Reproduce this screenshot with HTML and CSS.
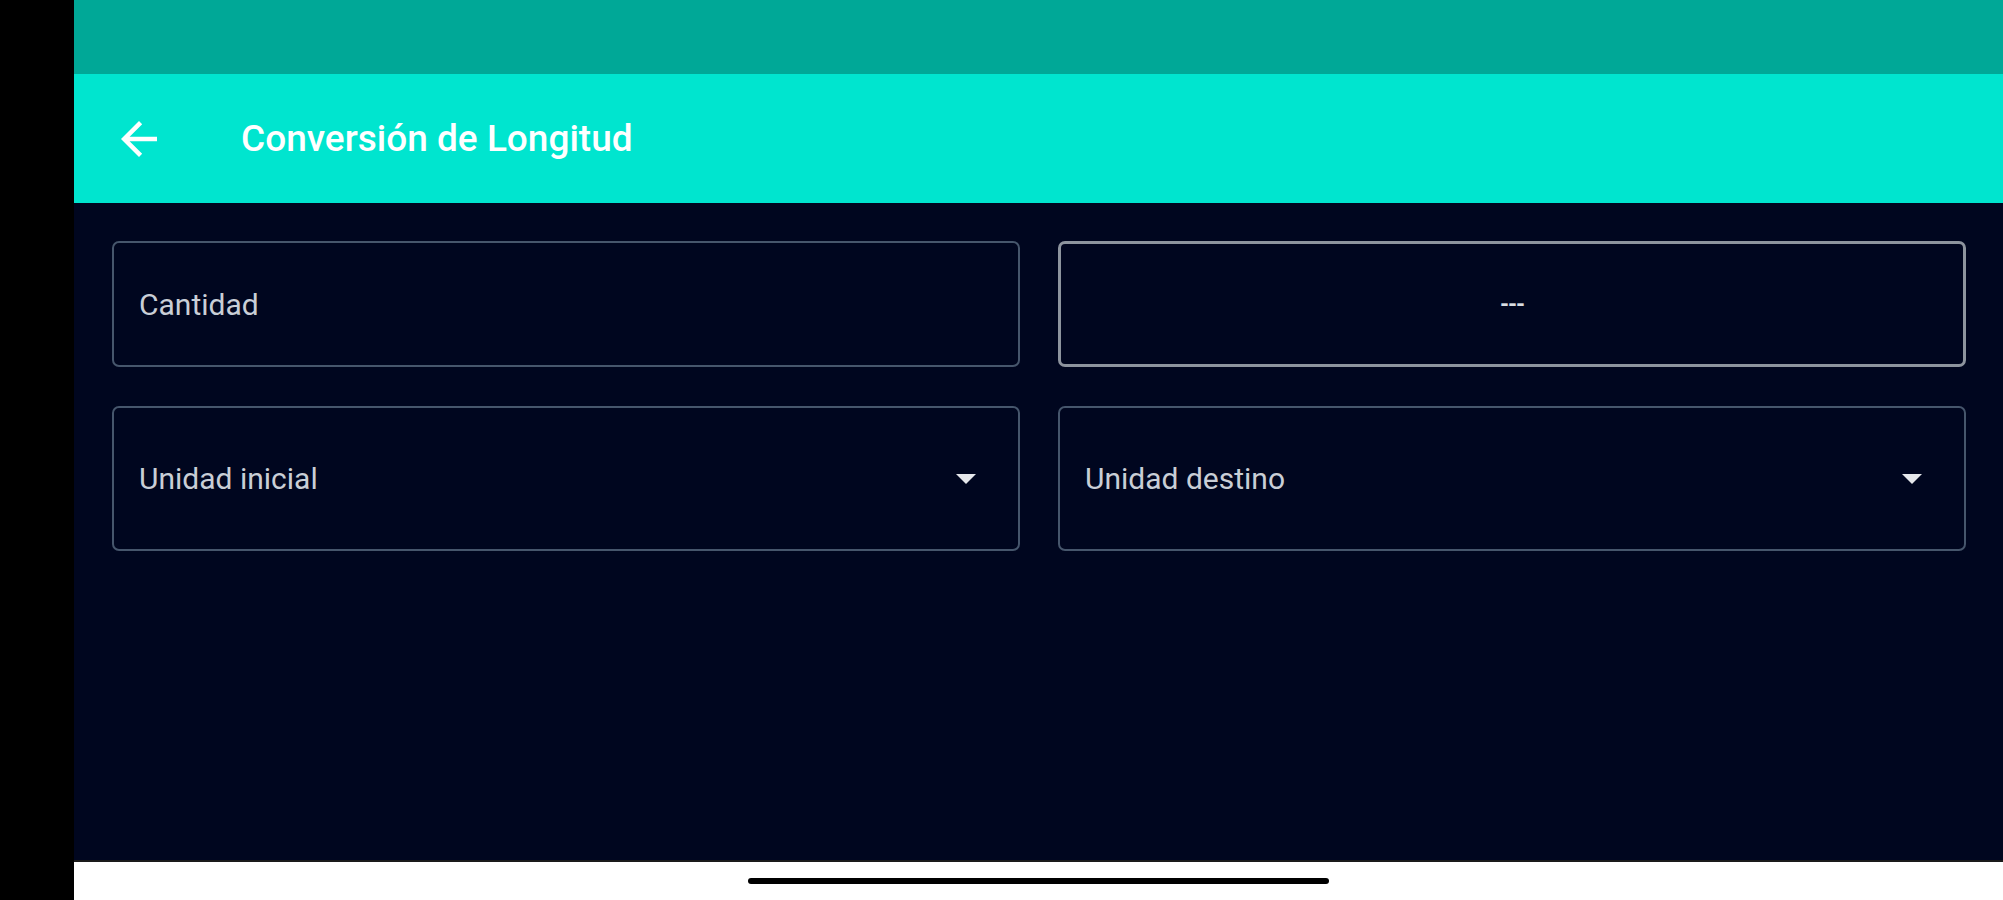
FILE: index.html
```html
<!DOCTYPE html>
<html lang="es">
<head>
    <meta charset="UTF-8">
    <meta name="viewport" content="width=device-width, initial-scale=1.0">
    <title>Conversión de Longitud</title>
    <link rel="stylesheet" href="styles.css">
</head>
<body>
    <div class="device">
        <div class="side-bar"></div>

        <div class="screen">
            <div class="status-bar"></div>

            <header class="app-bar">
                <button class="back-btn" aria-label="Volver">
                    <svg viewBox="0 0 24 24" width="54" height="54">
                        <path d="M20 11H7.83l5.59-5.59L12 4l-8 8 8 8 1.41-1.41L7.83 13H20v-2z" fill="#ffffff"/>
                    </svg>
                </button>
                <h1>Conversión de Longitud</h1>
            </header>

            <main class="content">
                <div class="field field-input">
                    <span class="field-label">Cantidad</span>
                </div>
                <div class="field field-result">
                    <span class="result-value">---</span>
                </div>

                <div class="field field-select">
                    <span class="field-label">Unidad inicial</span>
                    <span class="dropdown-arrow"></span>
                </div>
                <div class="field field-select">
                    <span class="field-label">Unidad destino</span>
                    <span class="dropdown-arrow"></span>
                </div>
            </main>

            <div class="nav-bar">
                <span class="home-indicator"></span>
            </div>
        </div>
    </div>
</body>
</html>
```

FILE: styles.css
```css
:root {
    --status-color: #00a897;
    --primary-color: #00e5cf;
    --bg-color: #00061f;
    --border-color: #46566c;
    --label-color: #c9ced6;
}

body {
    margin: 0;
    padding: 0;
    font-family: Roboto, "Noto Sans", Arial, sans-serif;
    background-color: #000000;
}

.device {
    display: flex;
    height: 900px;
    width: 2003px;
}

.side-bar {
    width: 74px;
    background-color: #000000;
}

.screen {
    flex: 1;
    display: flex;
    flex-direction: column;
    background-color: var(--bg-color);
}

.status-bar {
    height: 74px;
    background-color: var(--status-color);
}

.app-bar {
    height: 129px;
    background-color: var(--primary-color);
    display: flex;
    align-items: center;
    box-sizing: border-box;
    padding-left: 38px;
}

.back-btn {
    background: none;
    border: none;
    padding: 0;
    width: 54px;
    height: 54px;
    display: flex;
    cursor: pointer;
}

.app-bar h1 {
    margin: 0 0 0 75px;
    font-size: 37px;
    font-weight: 500;
    color: #ffffff;
    letter-spacing: 0;
}

.content {
    flex: 1;
    display: grid;
    grid-template-columns: 1fr 1fr;
    grid-template-rows: 126px 145px;
    gap: 39px 38px;
    padding: 38px 37px 0 38px;
    align-content: start;
}

.field {
    border: 2px solid var(--border-color);
    border-radius: 7px;
    display: flex;
    align-items: center;
    padding: 0 25px;
    position: relative;
}

.field-label {
    color: var(--label-color);
    font-size: 30px;
}

.field-result {
    border: 3px solid #8d949e;
    justify-content: center;
}

.result-value {
    color: #d8dce2;
    font-size: 23px;
    font-weight: 700;
    letter-spacing: -1px;
}

.field-select {
    justify-content: space-between;
    padding-right: 42px;
}

.dropdown-arrow {
    width: 0;
    height: 0;
    border-left: 10px solid transparent;
    border-right: 10px solid transparent;
    border-top: 10px solid #e6e8ec;
}

.nav-bar {
    height: 40px;
    background-color: #ffffff;
    border-top: 2px solid #1a1a1a;
    box-sizing: border-box;
    display: flex;
    justify-content: center;
    align-items: center;
}

.home-indicator {
    width: 581px;
    height: 6px;
    background-color: #000000;
    border-radius: 3px;
}
```
